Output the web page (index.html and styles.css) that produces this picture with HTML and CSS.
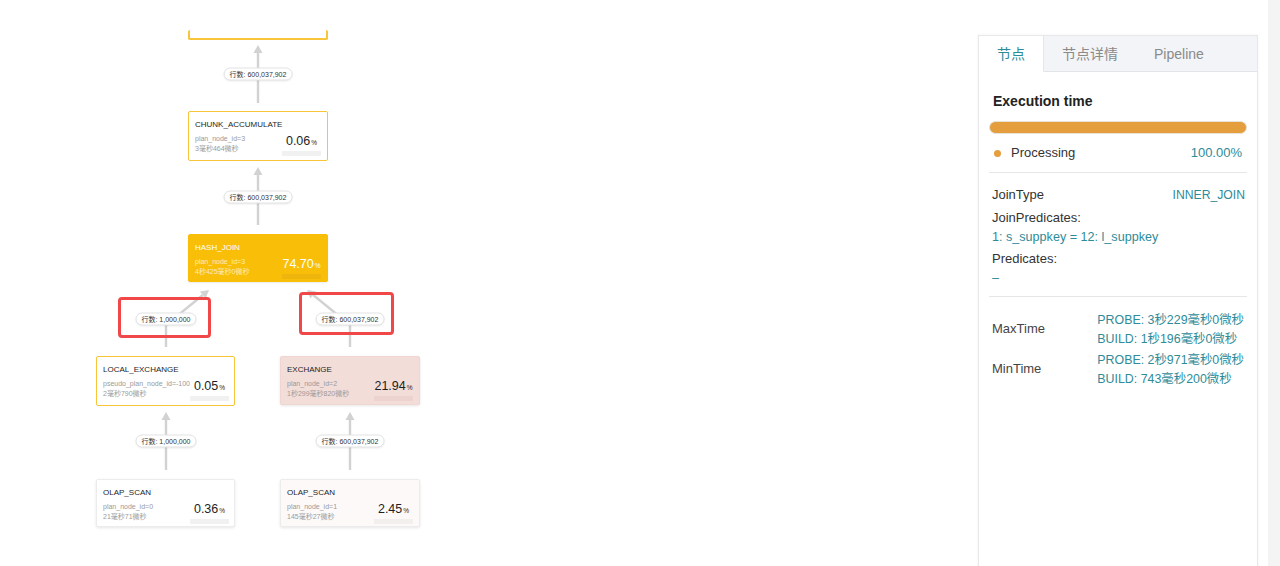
FILE: index.html
```html
<!DOCTYPE html>
<html lang="zh">
<head>
<meta charset="utf-8">
<title>Query Profile</title>
<link rel="stylesheet" href="styles.css">
</head>
<body>
<div class="page">
  <div class="canvas">
    <svg class="edges" width="978" height="566" viewBox="0 0 978 566" xmlns="http://www.w3.org/2000/svg">
      <g stroke="#d2d2d2" stroke-width="2.4" fill="none">
        <line x1="258" y1="103" x2="258" y2="52"/>
        <line x1="258" y1="225" x2="258" y2="174"/>
        <polyline points="166,347 166,325 202.8,295"/>
        <polyline points="350,347 350,325 313.2,295"/>
        <line x1="166" y1="470" x2="166" y2="419"/>
        <line x1="350" y1="470" x2="350" y2="419"/>
      </g>
      <g fill="#d2d2d2">
        <polygon points="258,45 253.5,53 262.5,53"/>
        <polygon points="258,167 253.5,175 262.5,175"/>
        <polygon points="209,290 205.6,298.4 200,291.5"/>
        <polygon points="307,290 316,291.5 310.4,298.4"/>
        <polygon points="166,412 161.5,420 170.5,420"/>
        <polygon points="350,412 345.5,420 354.5,420"/>
      </g>
    </svg>

    <div class="node node-cut"></div>

    <span class="rows" style="left:258px;top:74px">行数: 600,037,902</span>
    <span class="rows" style="left:258px;top:197px">行数: 600,037,902</span>
    <span class="rows" style="left:166px;top:319px">行数: 1,000,000</span>
    <span class="rows" style="left:350px;top:319px">行数: 600,037,902</span>
    <span class="rows" style="left:166px;top:441px">行数: 1,000,000</span>
    <span class="rows" style="left:350px;top:441px">行数: 600,037,902</span>

    <div class="node node-outline" style="left:188px;top:111px">
      <div class="node-title">CHUNK_ACCUMULATE</div>
      <div class="node-body">
        <div class="node-meta"><div>plan_node_id=3</div><div>3毫秒464微秒</div></div>
        <div class="node-stat"><div class="pct">0.06<small>%</small></div><div class="pct-bar"></div></div>
      </div>
    </div>

    <div class="node node-hot" style="left:188px;top:234px">
      <div class="node-title">HASH_JOIN</div>
      <div class="node-body">
        <div class="node-meta"><div>plan_node_id=3</div><div>4秒425毫秒0微秒</div></div>
        <div class="node-stat"><div class="pct">74.70<small>%</small></div><div class="pct-bar"></div></div>
      </div>
    </div>

    <div class="node node-outline" style="left:96px;top:356px;width:139px">
      <div class="node-title">LOCAL_EXCHANGE</div>
      <div class="node-body">
        <div class="node-meta"><div>pseudo_plan_node_id=-100</div><div>2毫秒790微秒</div></div>
        <div class="node-stat"><div class="pct">0.05<small>%</small></div><div class="pct-bar"></div></div>
      </div>
    </div>

    <div class="node node-warm" style="left:280px;top:356px;height:49px">
      <div class="node-title">EXCHANGE</div>
      <div class="node-body">
        <div class="node-meta"><div>plan_node_id=2</div><div>1秒299毫秒820微秒</div></div>
        <div class="node-stat"><div class="pct">21.94<small>%</small></div><div class="pct-bar"></div></div>
      </div>
    </div>

    <div class="node node-plain" style="left:96px;top:479px;width:139px">
      <div class="node-title">OLAP_SCAN</div>
      <div class="node-body">
        <div class="node-meta"><div>plan_node_id=0</div><div>21毫秒71微秒</div></div>
        <div class="node-stat"><div class="pct">0.36<small>%</small></div><div class="pct-bar"></div></div>
      </div>
    </div>

    <div class="node node-plain node-tint" style="left:280px;top:479px">
      <div class="node-title">OLAP_SCAN</div>
      <div class="node-body">
        <div class="node-meta"><div>plan_node_id=1</div><div>145毫秒27微秒</div></div>
        <div class="node-stat"><div class="pct">2.45<small>%</small></div><div class="pct-bar"></div></div>
      </div>
    </div>

    <div class="mark" style="left:118px;top:297px;width:93px;height:41px"></div>
    <div class="mark" style="left:299px;top:292px;width:95px;height:43px"></div>
  </div>

  <aside class="panel">
    <div class="tabs">
      <div class="tab tab-active">节点</div>
      <div class="tab">节点详情</div>
      <div class="tab">Pipeline</div>
      <div class="tab-fill"></div>
    </div>
    <div class="panel-body">
      <div class="exec-title">Execution time</div>
      <div class="exec-bar"></div>
      <div class="legend">
        <span class="dot"></span>
        <span class="legend-name">Processing</span>
        <span class="teal">100.00%</span>
      </div>
      <div class="divider"></div>
      <div class="kv kv-first">
        <span>JoinType</span>
        <span class="teal">INNER_JOIN</span>
      </div>
      <div class="label l-join">JoinPredicates:</div>
      <div class="value teal">1: s_suppkey = 12: l_suppkey</div>
      <div class="label l-pred">Predicates:</div>
      <div class="value teal">–</div>
      <div class="divider d2"></div>
      <div class="timing t-max">
        <span>MaxTime</span>
        <div class="teal times"><div>PROBE: 3秒229毫秒0微秒</div><div>BUILD: 1秒196毫秒0微秒</div></div>
      </div>
      <div class="timing t-min">
        <span>MinTime</span>
        <div class="teal times"><div>PROBE: 2秒971毫秒0微秒</div><div>BUILD: 743毫秒200微秒</div></div>
      </div>
    </div>
  </aside>
  <div class="gap"></div>
  <div class="rail"></div>
</div>
</body>
</html>
```

FILE: styles.css
```css
html, body {
  margin: 0;
  padding: 0;
  background: #ffffff;
}

body {
  font-family: "Liberation Sans", "Noto Sans CJK SC", Arial, sans-serif;
  color: #333;
}

.page {
  display: flex;
  width: 1280px;
  height: 566px;
  overflow: hidden;
}

/* ---------- diagram canvas ---------- */
.canvas {
  position: relative;
  width: 978px;
  height: 566px;
  flex: none;
}

.edges {
  position: absolute;
  left: 0;
  top: 0;
}

.rows {
  position: absolute;
  transform: translate(-50%, -50%);
  white-space: nowrap;
  font-size: 7px;
  line-height: 11px;
  padding: 0 5px;
  color: #333;
  background: #fff;
  border: 1px solid #e3e3e3;
  border-radius: 7px;
  box-shadow: 0 1px 2px rgba(0, 0, 0, 0.07);
}

.node {
  position: absolute;
  box-sizing: border-box;
  width: 140px;
  height: 50px;
  border-radius: 2px;
  padding: 6px 0 0 6px;
  background: #fff;
}

.node-cut {
  left: 188px;
  top: 30px;
  height: 10px;
  border: 2px solid #f8c53a;
  border-top: 0;
  padding: 0;
}

.node-outline {
  border: 1.5px solid #f8c53a;
}

.node-hot {
  height: 48px;
  background: #f9be07;
  border: 1px solid #f9be07;
  color: #fff;
  box-shadow: 0 1px 2px rgba(0, 0, 0, 0.08);
}

.node-warm {
  background: #f3ddd9;
  border: 1px solid #efd6d2;
  box-shadow: 0 1px 3px rgba(0, 0, 0, 0.1);
}

.node-plain {
  height: 48px;
  border: 1px solid #ececec;
  box-shadow: 0 1px 3px rgba(0, 0, 0, 0.1);
}

.node-tint {
  background: #fdf9f9;
}

.node-title {
  font-size: 8px;
  line-height: 14px;
  color: #1e1e1e;
  white-space: nowrap;
}

.node-hot .node-title {
  color: #fff;
}

.node-body {
  display: flex;
  margin-top: 1.5px;
}

.node-meta {
  width: 87px;
  flex: none;
  font-size: 7px;
  line-height: 10px;
  color: #9a9a9a;
  white-space: nowrap;
}

.node-hot .node-meta {
  color: rgba(255, 255, 255, 0.72);
}

.node-stat {
  width: 39px;
  flex: none;
  display: flex;
  flex-direction: column;
  align-items: center;
}

.pct {
  font-size: 12.5px;
  line-height: 14px;
  color: #1e1e1e;
  white-space: nowrap;
}

.pct small {
  font-size: 6.5px;
  margin-left: 1px;
}

.node-hot .pct {
  color: #fff;
}

.pct-bar {
  width: 39px;
  height: 5px;
  margin-top: 1px;
  background: #f1f1f1;
}

.node-hot .pct-bar {
  background: #eeb50d;
}

.node-warm .pct-bar {
  background: #ecd3cf;
}

.node-tint .pct-bar {
  background: #f3efef;
}

.mark {
  position: absolute;
  box-sizing: border-box;
  border: 3px solid #f04848;
  border-radius: 4px;
}

/* ---------- side panel ---------- */
.panel {
  flex: none;
  box-sizing: border-box;
  width: 280px;
  height: 560px;
  margin-top: 35px;
  border: 1px solid #e8e8e8;
  border-bottom: 0;
  box-shadow: 0 0 3px rgba(0, 0, 0, 0.05);
  background: #fff;
  display: flex;
  flex-direction: column;
}

.tabs {
  display: flex;
  height: 36px;
  flex: none;
}

.tab {
  box-sizing: border-box;
  height: 36px;
  padding: 0 18px;
  font-size: 14px;
  line-height: 36px;
  color: #8a8a8a;
  background: #f3f4f8;
  border-bottom: 1px solid #e3e4e8;
  white-space: nowrap;
}

.tab-active {
  color: #2e8b99;
  background: #fff;
  border-bottom-color: #fff;
  border-right: 1px solid #e6e6e6;
}

.tab-fill {
  flex: 1;
  background: #f3f4f8;
  border-bottom: 1px solid #e3e4e8;
}

.panel-body {
  padding: 0 10px;
  font-size: 13px;
  color: #333;
}

.teal {
  color: #2e8b99;
}

.exec-title {
  margin: 19px 0 0 4px;
  font-size: 14px;
  line-height: 20px;
  font-weight: 600;
  color: #222;
}

.exec-bar {
  box-sizing: border-box;
  margin-top: 10px;
  height: 13px;
  border-radius: 7px;
  background: #e49e3d;
  border: 1px solid #e8e2d8;
}

.legend {
  display: flex;
  align-items: center;
  margin-top: 9px;
  padding: 0 5px 0 5px;
  line-height: 20px;
}

.dot {
  width: 7px;
  height: 7px;
  border-radius: 50%;
  background: #e49e3d;
  margin-right: 10px;
}

.legend-name {
  flex: 1;
  color: #333;
}

.divider {
  height: 1px;
  background: #e6e6e6;
  margin-top: 9px;
}

.kv {
  display: flex;
  justify-content: space-between;
  padding: 0 2px 0 3px;
  line-height: 20px;
}

.kv .teal {
  font-size: 12.2px;
}

.kv-first {
  margin-top: 12px;
}

.label {
  padding-left: 3px;
  line-height: 20px;
}

.l-join {
  margin-top: 3px;
}

.l-pred {
  margin-top: 2px;
}

.value {
  padding-left: 3px;
  line-height: 19px;
  font-size: 12.6px;
}

.d2 {
  margin-top: 8px;
}

.timing {
  display: flex;
  justify-content: space-between;
  align-items: center;
  padding: 0 3px 0 3px;
  line-height: 18.5px;
}

.times {
  font-size: 12.4px;
}

.t-max {
  margin-top: 14px;
}

.t-min {
  margin-top: 3px;
}

.timing > span {
  color: #444;
}

.gap {
  flex: none;
  width: 10px;
}

.rail {
  flex: 1;
  background: #f4f4f4;
}
```
